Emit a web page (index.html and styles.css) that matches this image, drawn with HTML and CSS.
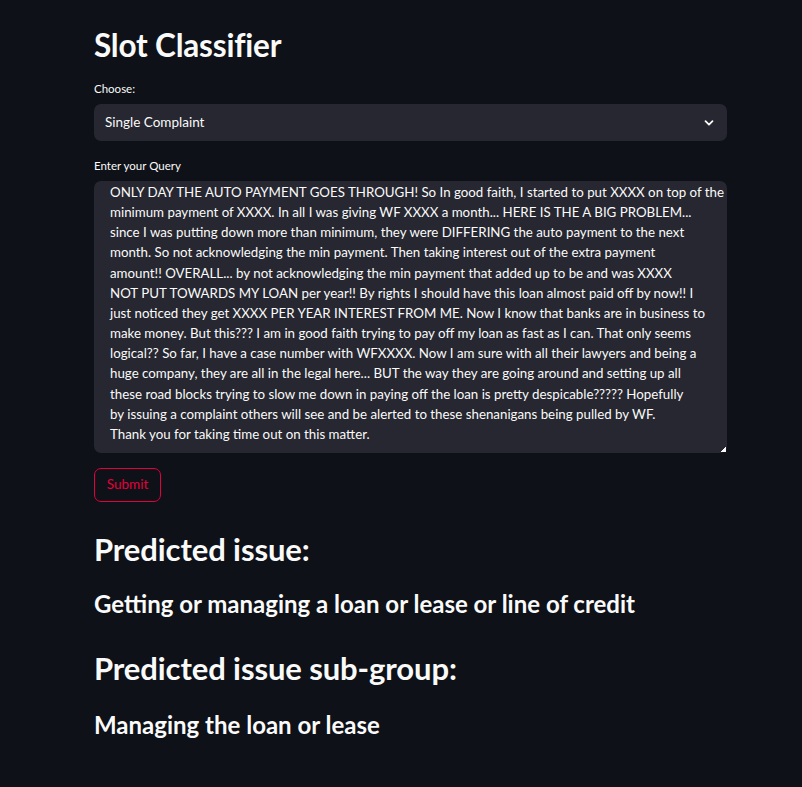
FILE: index.html
```html
<!DOCTYPE html>
<html>
<head>
<meta charset="utf-8">
<link rel="stylesheet" href="styles.css">
</head>
<body>
<main class="main">
  <h1 class="title">Slot Classifier</h1>
  <div class="field field-select">
    <label class="label">Choose:</label>
    <div class="select">
      <span class="select-value">Single Complaint</span>
      <svg class="chevron" width="12" height="12" viewBox="0 0 12 12"><path d="M2.5 4.2 L6 7.7 L9.5 4.2" fill="none" stroke="#fafafa" stroke-width="1.8" stroke-linecap="round" stroke-linejoin="round"/></svg>
    </div>
  </div>
  <div class="field field-text">
    <label class="label">Enter your Query</label>
    <textarea class="textarea" wrap="off">ONLY DAY THE AUTO PAYMENT GOES THROUGH! So In good faith, I started to put XXXX on top of the
minimum payment of XXXX. In all I was giving WF XXXX a month... HERE IS THE A BIG PROBLEM...
since I was putting down more than minimum, they were DIFFERING the auto payment to the next
month. So not acknowledging the min payment. Then taking interest out of the extra payment
amount!! OVERALL... by not acknowledging the min payment that added up to be and was XXXX
NOT PUT TOWARDS MY LOAN per year!! By rights I should have this loan almost paid off by now!! I
just noticed they get XXXX PER YEAR INTEREST FROM ME. Now I know that banks are in business to
make money. But this??? I am in good faith trying to pay off my loan as fast as I can. That only seems
logical?? So far, I have a case number with WFXXXX. Now I am sure with all their lawyers and being a
huge company, they are all in the legal here... BUT the way they are going around and setting up all
these road blocks trying to slow me down in paying off the loan is pretty despicable????? Hopefully
by issuing a complaint others will see and be alerted to these shenanigans being pulled by WF.
Thank you for taking time out on this matter.</textarea>
  </div>
  <button class="submit">Submit</button>
  <h2 class="result-head">Predicted issue:</h2>
  <h3 class="result-value">Getting or managing a loan or lease or line of credit</h3>
  <h2 class="result-head result-head-second">Predicted issue sub-group:</h2>
  <h3 class="result-value result-value-last">Managing the loan or lease</h3>
</main>
</body>
</html>
```

FILE: styles.css
```css
html, body {
  margin: 0;
  padding: 0;
  background: #0e1117;
  color: #fafafa;
  font-family: "Lato", "Noto Sans", sans-serif;
}
.main {
  width: 633px;
  margin-left: 94px;
  padding-top: 23px;
  display: flex;
  flex-direction: column;
}
.title {
  margin: 0;
  font-size: 31.5px;
  font-weight: 700;
  line-height: 44px;
  letter-spacing: -0.2px;
}
.field {
  display: flex;
  flex-direction: column;
}
.field-select {
  margin-top: 14px;
}
.field-text {
  margin-top: 17px;
}
.label {
  font-size: 11.5px;
  line-height: 16px;
  margin-bottom: 7px;
}
.select {
  height: 37px;
  background: #262730;
  border-radius: 7px;
  display: flex;
  align-items: center;
  justify-content: space-between;
  padding: 0 12px 0 11px;
  box-sizing: border-box;
}
.select-value {
  font-size: 13.5px;
  line-height: 16px;
  margin-top: -1px;
}
.chevron {
  display: block;
}
.textarea {
  height: 272px;
  width: 100%;
  box-sizing: border-box;
  background: #262730;
  color: #fafafa;
  border: none;
  border-radius: 7px;
  padding: 1px 4px 0 16px;
  font-family: "Lato", "Noto Sans", sans-serif;
  font-size: 13.3px;
  line-height: 20.15px;
  resize: vertical;
  overflow: hidden;
  outline: none;
  white-space: pre;
}
.textarea::-webkit-scrollbar {
  width: 8px;
  height: 8px;
}
.textarea::-webkit-resizer {
  background: linear-gradient(135deg, transparent 52%, #fafafa 52%) no-repeat right 1px bottom 1px / 6px 6px;
}
.submit {
  align-self: flex-start;
  margin-top: 15px;
  height: 34px;
  width: 67px;
  background: transparent;
  border: 1px solid #e3003c;
  border-radius: 7px;
  color: #e3003c;
  font-family: "Lato", "Noto Sans", sans-serif;
  font-size: 13.5px;
  padding: 0 0 2px 0;
}
.result-head {
  margin: 27px 0 0 0;
  font-size: 31px;
  font-weight: 700;
  line-height: 40px;
  letter-spacing: -0.1px;
}
.result-head-second {
  margin-top: 28px;
}
.result-value {
  margin: 19px 0 0 0;
  font-size: 24px;
  font-weight: 700;
  line-height: 32px;
}
.result-value-last {
  margin-top: 21px;
}
```
